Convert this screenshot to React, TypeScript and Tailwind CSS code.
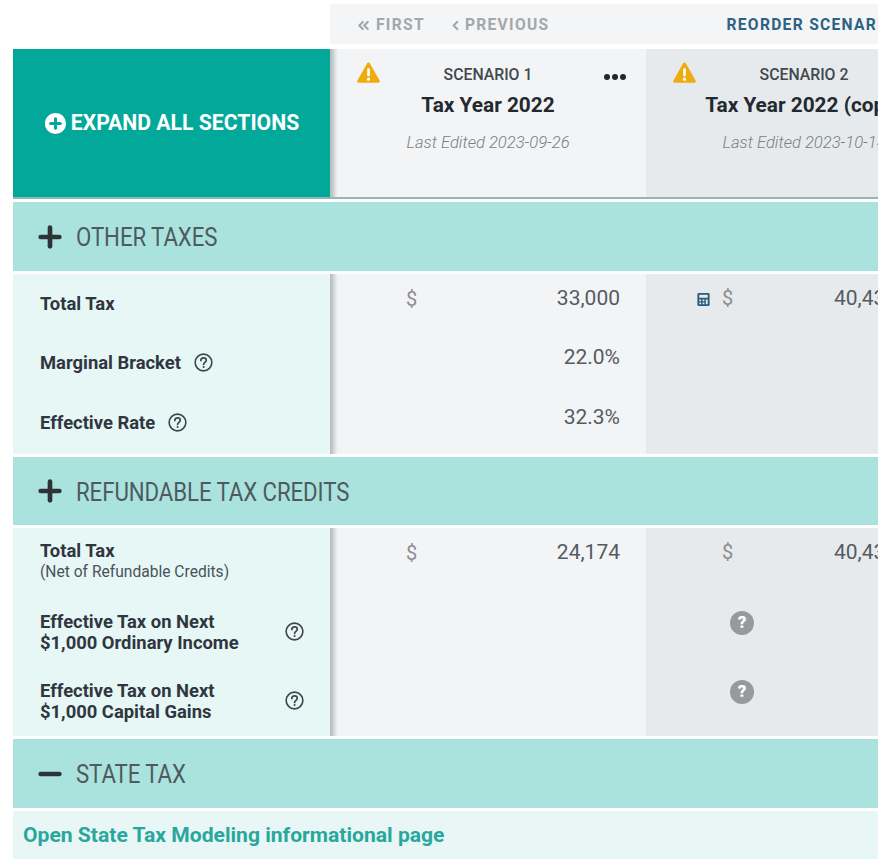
import { CirclePlus, ChevronsLeft, ChevronLeft, Plus, Minus } from 'lucide-react'

const shade = 'bg-[linear-gradient(90deg,#b4b9b9_0,#c9cdce_3px,#e6e8ea_6px,#f3f4f6_8px)]'
const rowGrid = 'grid grid-cols-[317px_316px_316px]'

function Warning() {
  return (
    <svg viewBox="0 0 24 22" className="w-[23px] h-[21px]">
      <path d="M12 0.5c.6 0 1.1.3 1.4.8l10.2 18.2c.6 1-.1 2.2-1.3 2.2H1.7c-1.2 0-1.9-1.2-1.3-2.2L10.6 1.3c.3-.5.8-.8 1.4-.8z" fill="#f0ab0c" />
      <rect x="10.6" y="6.5" width="2.8" height="8.5" rx="1" fill="#fff" />
      <circle cx="12" cy="18" r="1.7" fill="#fff" />
    </svg>
  )
}

function Dots() {
  return (
    <svg viewBox="0 0 24 6" className="w-[24px] h-[6px] text-[#23272c]" fill="currentColor">
      <circle cx="4" cy="3" r="3" />
      <circle cx="12" cy="3" r="3" />
      <circle cx="20" cy="3" r="3" />
    </svg>
  )
}

function Help() {
  return (
    <svg viewBox="0 0 20 20" className="w-[19px] h-[19px] shrink-0 text-[#3d4650]" fill="none" stroke="currentColor">
      <circle cx="10" cy="10" r="8.800" strokeWidth="1.700" />
      <path d="M7.200 8c0-1.700 1.200-2.800 2.900-2.800 1.600 0 2.800 1 2.800 2.400 0 2.200-2.800 2.200-2.800 4.400" strokeWidth="1.800" strokeLinecap="round" />
      <circle cx="10.100" cy="14.800" r="1.100" fill="currentColor" stroke="none" />
    </svg>
  )
}

function HelpFilled() {
  return (
    <div className="w-6 h-6 rounded-full bg-[#98999c] flex items-center justify-center text-white text-[17px] font-black leading-none">?</div>
  )
}

function Calc() {
  return (
    <svg viewBox="0 0 16 16" className="w-[15px] h-[15px] text-[#2b5a7c]">
      <path fill="currentColor" fillRule="evenodd" d="M3 1h10a1.500 1.500 0 0 1 1.500 1.500v11A1.500 1.500 0 0 1 13 15H3a1.500 1.500 0 0 1-1.500-1.500v-11A1.500 1.500 0 0 1 3 1zm.5 2v3h9V3h-9zm0 5v1.800h2V8h-2zm3.500 0v1.800h2V8H7zm3.500 0v5h2V8h-2zm-7 3.200V13h2v-1.800h-2zm3.500 0V13h2v-1.800H7z" />
    </svg>
  )
}

function Band({ title, open, h = 'h-[69px]' }: { title: string; open?: boolean; h?: string }) {
  const Icon = open ? Minus : Plus
  return (
    <div className={`${h} bg-[#aae3de] flex items-center pl-[21px] gap-[10px] w-[949px]`}>
      <Icon className="w-[32px] h-[32px] text-[#2f3338]" strokeWidth={3.500} />
      <span className="text-[25px] pt-[2px] text-[#4e5a60] tracking-[-0.1px] leading-none scale-x-[.89] origin-left whitespace-nowrap">{title}</span>
    </div>
  )
}

function Row({ h, vpb, label, sub, help, far, dollar, value, value2, calc, q }: {
  h: string
  vpb: string
  label: React.ReactNode
  sub?: string
  help?: boolean
  far?: boolean
  dollar?: boolean
  value?: string
  value2?: string
  calc?: boolean
  q?: boolean
}) {
  return (
    <div className={rowGrid}>
      <div className={`${h} bg-[#e6f7f5] flex items-center pl-[27px] pb-[2px] text-[#2f3640]`}>
        <div className={far ? 'w-[245px] shrink-0' : ''}>
          <div className="text-[18.400px] leading-[21px] font-bold">{label}</div>
          {sub && <div className="text-[15.600px] leading-[23px] text-[#4a525a]">{sub}</div>}
        </div>
        {help && <div className={far ? '' : 'ml-[13px]'}><Help /></div>}
      </div>
      <div className={`${h} ${vpb} ${shade} flex items-center pl-[76px] pr-[26px] text-[21px] text-[#555b61]`}>
        {dollar && <span className="text-[#8b8f92] text-[20px]">$</span>}
        <span className="ml-auto">{value}</span>
      </div>
      <div className={`${h} ${vpb} bg-[#e6eaed] flex items-center text-[21px] text-[#555b61]`}>
        {q ? (
          <div className="ml-[84px]"><HelpFilled /></div>
        ) : (
          <>
            <div className="w-[66px] flex justify-end pr-[1px]">{calc && <Calc />}</div>
            <div className="w-[122px] pl-[10px]">{dollar && <span className="text-[#8b8f92] text-[20px]">$</span>}</div>
            <span>{value2}</span>
          </>
        )}
      </div>
    </div>
  )
}

function ScenarioHead({ n, title, date, menu, bg }: { n: number; title: string; date: string; menu?: boolean; bg: string }) {
  return (
    <div className={`${bg} h-[148px] relative flex flex-col items-center pt-[15px]`}>
      <div className="absolute left-[27px] top-[13px]"><Warning /></div>
      {menu && <div className="absolute right-[19px] top-[25px]"><Dots /></div>}
      <div className="text-[15.800px] leading-[20px] font-medium text-[#42484f] pt-[1px]">SCENARIO {n}</div>
      <div className="text-[20.800px] leading-[26px] mt-[7px] font-bold text-[#23292f] whitespace-nowrap">{title}</div>
      <div className="text-[16.600px] leading-[20px] mt-[15px] italic font-light text-[#7a7f84] whitespace-nowrap">{date}</div>
    </div>
  )
}

export default function App() {
  return (
    <div className="w-[878px] h-[859px] overflow-hidden bg-white pt-[4px] pl-[13px] font-['Roboto',sans-serif]">
      <div className="w-[949px]">
        {/* top nav */}
        <div className="ml-[317px] h-[40px] bg-[#f3f5f7] flex items-center pl-[25px] pt-[3px] text-[15.600px] font-bold tracking-[1.300px] whitespace-nowrap">
          <span className="flex items-center text-[#a3a7aa]"><ChevronsLeft className="w-[17px] h-[17px] mr-[4px]" strokeWidth={3} />FIRST</span>
          <span className="flex items-center text-[#a3a7aa] ml-[23px]"><ChevronLeft className="w-[15px] h-[15px] mr-[2px]" strokeWidth={3} />PREVIOUS</span>
          <span className="text-[#2d6285] ml-[177px]">REORDER SCENARIOS</span>
        </div>

        {/* header row */}
        <div className={`${rowGrid} mt-[5px] border-b-2 border-[#8fb9b5]`}>
          <div className="bg-[#02a89a] h-[148px] flex items-center justify-center gap-[1px] pr-[3px] text-white text-[21.200px] font-bold whitespace-nowrap">
            <CirclePlus className="w-[29px] h-[29px] fill-white text-[#02a89a]" strokeWidth={2.500} />
            EXPAND ALL SECTIONS
          </div>
          <ScenarioHead n={1} title="Tax Year 2022" date="Last Edited 2023-09-26" menu bg={shade} />
          <ScenarioHead n={2} title="Tax Year 2022 (copy)" date="Last Edited 2023-10-14" bg="bg-[#e6eaed]" />
        </div>

        <div className="mt-[3px]"><Band title="OTHER TAXES" /></div>
        <div className="mt-[3px]">
          <Row h="h-[60px]" vpb="pb-[10px]" label="Total Tax" dollar value="33,000" value2="40,430" calc />
          <Row h="h-[59px]" vpb="pb-[12px]" label="Marginal Bracket" help value="22.0%" />
          <Row h="h-[61px]" vpb="pb-[12px]" label="Effective Rate" help value="32.3%" />
        </div>

        <div className="mt-[3px]"><Band title="REFUNDABLE TAX CREDITS" h="h-[68px]" /></div>
        <div className="mt-[3px]">
          <Row h="h-[70px]" vpb="pb-[20px]" label="Total Tax" sub="(Net of Refundable Credits)" dollar value="24,174" value2="40,430" />
          <Row h="h-[69px]" vpb="pb-[20px]" far help q label={<>Effective Tax on Next<br />$1,000 Ordinary Income</>} />
          <Row h="h-[69px]" vpb="pb-[20px]" far help q label={<>Effective Tax on Next<br />$1,000 Capital Gains</>} />
        </div>

        <div className="mt-[3px]"><Band title="STATE TAX" open /></div>
        <div className="mt-[3px] h-[48px] bg-[#e8f7f5] flex items-center pl-[10px] text-[21.100px] font-bold text-[#2aa79c]">
          Open State Tax Modeling informational page
        </div>
      </div>
    </div>
  )
}
